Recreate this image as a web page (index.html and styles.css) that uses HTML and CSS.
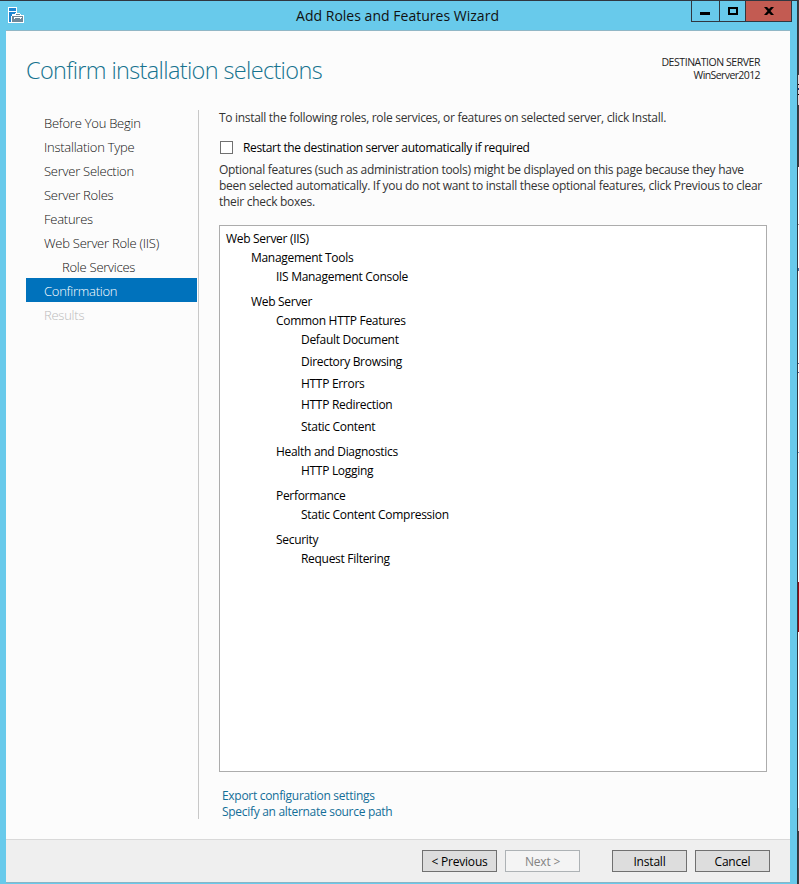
FILE: index.html
```html
<!DOCTYPE html>
<html lang="en">
<head>
<meta charset="utf-8">
<title>Add Roles and Features Wizard</title>
<link rel="stylesheet" href="styles.css">
</head>
<body>
<div class="window">
  <header class="titlebar">
    <svg class="app-icon" width="16" height="16" viewBox="0 0 16 16" shape-rendering="crispEdges">
      <path fill="#fff" d="M0 0h9v6h3v1h1v1h3v8H0z"/>
      <path fill="#1f86d2" d="M1 1h7v3H1zM1 5h7v1H7v1H4v2H3v6H1z"/>
      <path fill="#6f8899" d="M4 9h11v6H4zM8 7h4v1H8z"/>
      <path fill="#fff" d="M6 10h8v1H6zM6 11h1v1H6zM12 11h1v1h-1z"/>
    </svg>
    <h1 class="window-title">Add Roles and Features Wizard</h1>
    <div class="controls">
      <span class="control minimize"><i></i></span>
      <span class="control maximize"><i></i></span>
      <span class="control close"><svg width="10" height="8" viewBox="0 0 10 8"><path d="M0 0h3l2 2 2-2h3L6.500 4 10 8H7L5 6 3 8H0l3.500-4z"/></svg></span>
    </div>
  </header>
  <main class="client">
    <div class="heading">
      <h2 class="page-title">Confirm installation selections</h2>
      <div class="destination"><div class="dest-label">DESTINATION SERVER</div><div class="dest-name">WinServer2012</div></div>
    </div>
    <div class="body">
      <nav class="steps">
        <a>Before You Begin</a>
        <a>Installation Type</a>
        <a>Server Selection</a>
        <a>Server Roles</a>
        <a>Features</a>
        <a>Web Server Role (IIS)</a>
        <a class="sub">Role Services</a>
        <a class="active">Confirmation</a>
        <a class="disabled">Results</a>
      </nav>
      <section class="content">
        <p class="intro">To install the following roles, role services, or features on selected server, click Install.</p>
        <label class="restart"><span class="checkbox"></span><span>Restart the destination server automatically if required</span></label>
        <p class="note">Optional features (such as administration tools) might be displayed on this page because they have<br>been selected automatically. If you do not want to install these optional features, click Previous to clear<br>their check boxes.</p>
        <div class="tree">
          <div>Web Server (IIS)</div>
          <div class="l1">Management Tools</div>
          <div class="l2">IIS Management Console</div>
          <div class="l1 group">Web Server</div>
          <div class="l2">Common HTTP Features</div>
          <div class="l3">Default Document</div>
          <div class="l3 next">Directory Browsing</div>
          <div class="l3 next">HTTP Errors</div>
          <div class="l3 next tight">HTTP Redirection</div>
          <div class="l3 next">Static Content</div>
          <div class="l2 group">Health and Diagnostics</div>
          <div class="l3">HTTP Logging</div>
          <div class="l2 group">Performance</div>
          <div class="l3">Static Content Compression</div>
          <div class="l2 group">Security</div>
          <div class="l3">Request Filtering</div>
        </div>
        <div class="links"><a>Export configuration settings</a><a>Specify an alternate source path</a></div>
      </section>
    </div>
    <footer class="footer">
      <button>&lt; Previous</button>
      <button disabled>Next &gt;</button>
      <button class="install">Install</button>
      <button>Cancel</button>
    </footer>
  </main>
</div>
<div class="backdrop"></div>
</body>
</html>
```
FILE: styles.css
```css
* { box-sizing: border-box; }
body {
  margin: 0; width: 799px; height: 884px; overflow: hidden; display: flex;
  font: 12px/16px "Open Sans", "Noto Sans", sans-serif; color: #333;
  letter-spacing: -0.3px; white-space: nowrap;
}
h1, h2, p { margin: 0; font-weight: 400; }
.window {
  width: 798px; height: 884px; background: #68caeb;
  border-top: 1px solid #303740; border-right: 1px solid #303740;
  display: flex; flex-direction: column;
}
.titlebar { height: 29px; display: flex; }
.app-icon { margin: 6px 0 0 8px; flex: none; }
.window-title { width: 667px; padding: 5px 0 0 80px; text-align: center; font-size: 14px; line-height: 19px; color: #111; letter-spacing: 0.02px; }
.controls { display: flex; height: 21px; width: 101px; border: 1px solid #303740; border-top: 0; }
.control { display: flex; align-items: center; justify-content: center; border-right: 1px solid #303740; }
.minimize { width: 28px; }
.minimize i { width: 10px; height: 3px; background: #000; margin: 5px 1px 0 0; }
.maximize { width: 26px; }
.maximize i { width: 10px; height: 8px; border: 2px solid #000; }
.close { width: 45px; background: #c35b52; border: 0; }
.client { margin: 0 0 1px 6px; width: 784px; height: 853px; background: #fcfcfc; border-top: 1px solid #91b7c6; border-bottom: 1px solid #8ab4c6; display: flex; flex-direction: column; }
.heading { height: 79px; padding: 23px 30px 0 20px; display: flex; justify-content: space-between; }
.page-title { font-size: 23.5px; line-height: 32px; font-weight: 300; color: #16738f; letter-spacing: -0.65px; }
.destination { font-size: 10.5px; line-height: 13px; text-align: right; padding-top: 2px; color: #222; letter-spacing: -0.45px; }
.dest-name { font-size: 10.5px; letter-spacing: -0.6px; }
.body { display: flex; height: 729px; padding-left: 20px; }
.steps { width: 173px; height: 709px; border-right: 1px solid #c8c8c8; padding-right: 1px; font-size: 13px; font-weight: 300; color: #111; letter-spacing: -0.25px; }
.steps a { display: block; height: 24px; line-height: 27px; padding-left: 18px; }
.steps .sub { padding-left: 36px; }
.steps .active { background: #0072bc; color: #fff; }
.steps .disabled { color: #bbb; }
.content { padding-left: 20px; width: 568px; }
.intro { margin-bottom: 14px; }
.restart { display: flex; color: #000; height: 16px; letter-spacing: -0.34px; }
.checkbox { width: 13px; height: 13px; border: 1px solid #707070; background: #fff; margin: 1px 10px 0 1px; }
.note { margin-top: 6px; letter-spacing: -0.285px; }
.tree { margin-top: 15px; height: 547px; background: #fff; border: 1px solid #acacac; padding: 5px 6px; color: #000; }
.tree div { height: 16px; margin-bottom: 3px; }
.tree .l1 { padding-left: 25px; }
.tree .l2 { padding-left: 50px; }
.tree .l3 { padding-left: 75px; }
.tree .group { margin-top: 9px; }
.tree .next { margin-top: 6px; }
.tree .tight { margin-top: 5px; }
.links { padding: 16px 0 0 3px; color: #136e98; }
.links a { display: block; }
.footer { height: 43px; background: #efefef; border-top: 1px solid #d9d9d9; display: flex; padding: 10px 0 0 416px; gap: 8px; }
button { width: 75px; height: 22px; padding: 1px 0 0; border: 1px solid #707070; background: #ddd; font: inherit; color: #000; letter-spacing: -0.2px; }
button:disabled { border-color: #adb2b5; background: #f4f4f4; color: #838383; }
.install { margin-left: 24px; }
.backdrop { width: 1px; height: 884px; background: linear-gradient(#3c3e41 0 75px, #d8d8d8 75px 84px, #000 84px 85px, #d8d8d8 85px 88px, #183b78 88px 90px, #d8d8d8 90px 94px, #000 94px 95px, #d8d8d8 95px 105px, #3c3e41 105px 167px, #fff 167px 224px, #999 224px 225px, #fff 225px 268px, #4d7aaa 268px 271px, #fff 271px 363px, #506d9b 363px 364px, #fff 364px 372px, #506d9b 372px 373px, #fff 373px 452px, #79a9c6 452px 453px, #fff 453px 582px, #980d13 582px 632px, #fff 632px 808px, #d0d0d0 808px 831px, #3c3e41 831px); }
```
